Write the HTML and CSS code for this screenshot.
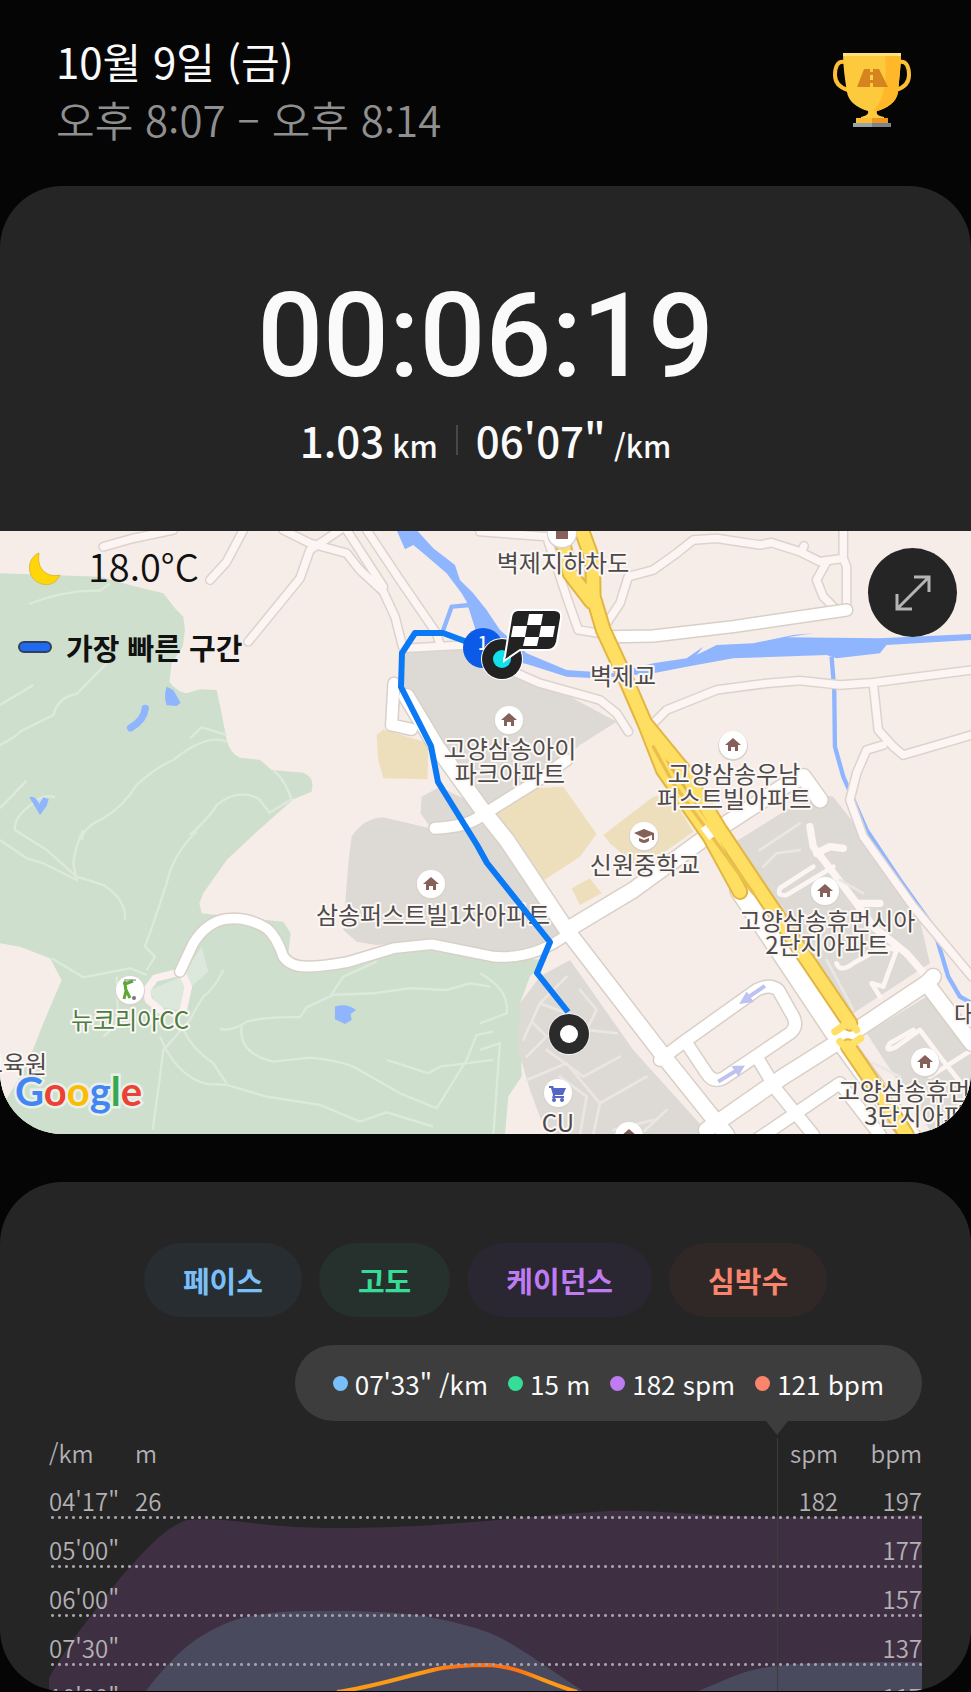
FILE: index.html
```html
<!DOCTYPE html>
<html lang="ko">
  <head>
    <meta charset="UTF-8" />
    <meta name="viewport" content="width=device-width, initial-scale=1" />
    <title>달리기 기록</title>
    <link rel="stylesheet" href="styles.css">
  </head>
  <body>
    <header class="top">
      <div>
        <h1 class="date">10월 9일 (금)</h1>
        <p class="period">오후 8:07 – 오후 8:14</p>
      </div>
      <svg class="trophy" viewBox="0 0 78 76" aria-hidden="true">
        <g fill="none" stroke="#fcbf35" stroke-width="4">
          <path d="M12 10C4 8 2 16 2 23c0 9 6 13 13 15" />
          <path d="M66 10c8-2 10 6 10 13 0 9-6 13-13 15" />
        </g>
        <path fill="#fdca3e" d="M10 2h58c0 12-2 26-3 38-1 10-12 17-21 19-1 3 1 5 7 6v3H28v-3c5-1 8-3 7-6-11-3-20-10-21-19C12 28 10 14 10 2z" />
        <path fill="#ffb82a" d="M52 2h16c0 12-2 26-3 38-1 10-12 17-21 19h-4c12-12 14-30 12-57z" />
        <rect x="10" y="1" width="58" height="3" fill="#ffe07a" />
        <path fill="#d5841f" d="M31 17h6v3h3v-3h6l9 18H40v-4h-3v4H24z" />
        <path fill="#ffce55" d="M37 23h3v5h-3z" />
        <rect x="23" y="66" width="16" height="6" fill="#fdbb36" />
        <rect x="39" y="66" width="16" height="6" fill="#f0961f" />
        <rect x="20" y="71" width="19" height="4" fill="#9aa5a8" />
        <rect x="39" y="71" width="19" height="4" fill="#79858b" />
      </svg>
    </header>

    <main>
      <section class="card summary">
        <div class="timer">00:06:19</div>
        <div class="stats">
          <span class="stat">1.03 <small>km</small></span>
          <i class="divider"></i>
          <span class="stat">06'07" <small>/km</small></span>
        </div>

        <div class="map">
          <svg class="map-canvas" viewBox="0 1 971 603">
            <defs>
              <g id="pin">
                <circle r="15" fill="#d9d3cd" cy="1" />
                <circle r="14" fill="#fff" />
              </g>
              <g id="home">
                <use href="#pin" />
                <path fill="#856159" d="M0-7l8 7H5v6H2V2h-4v4h-3V0h-3z" />
              </g>
            </defs>

            <!-- land, drawn at 3x -->
            <g transform="scale(0.3333)">
              <rect width="2916" height="1815" fill="#f6ede8" />
              <path fill="#cedfcd" d="M0 130L300 140 400 168 490 190 525 235 550 260 555 300 548 350 515 400 508 455Q530 485 560 490L600 478 650 480 665 550 680 630Q690 670 720 683L780 690 815 720 910 728Q940 740 937 770L935 785 880 808 760 915 680 990 610 1090 598 1120 605 1150 700 1160 850 1175 872 1210 865 1270 900 1300 1040 1300 1130 1260 1290 1240 1480 1280 1640 1290 1590 1340 1560 1420 1565 1640 1525 1700 1515 1815H0z" />
              <path fill="#f6ede8" d="M0 1240L60 1250 150 1285 185 1350 130 1480 95 1570 60 1640 0 1740z" />
              <path fill="#dce8dc" d="M605 1250L625 1325 575 1370 540 1440 470 1430 450 1380 545 1340z" />
              <g fill="#dddad5">
                <path d="M1215 365L1395 358 1580 430 1850 575 1740 645 1600 760 1470 850 1330 660 1210 500z" />
                <path d="M1265 800L1320 770 1440 830 1400 880 1290 890 1262 850z" />
                <path d="M1055 920Q1090 865 1150 862L1290 895 1490 880 1680 1160 1690 1210 1600 1260 1480 1275 1290 1230 1130 1245 1070 1235 1030 1200 1045 1000z" />
                <path d="M1620 1340L1710 1290 1900 1560 2130 1815H1640L1590 1680 1555 1560 1560 1420z" />
                <path d="M2200 940L2440 790 2500 800 2640 980 2760 1170 2790 1300 2560 1450 2500 1410z" />
                <path d="M2600 1510L2780 1400 2916 1540V1815H2800z" />
              </g>
              <g fill="#eedfbc">
                <path d="M1130 615L1150 598 1285 640 1283 748 1150 745 1135 690z" />
                <path d="M1490 850L1600 775 1690 770 1790 912 1740 980 1625 1055z" />
                <path d="M1810 915L1960 800 2010 790 2080 905 1960 990 1900 1000 1830 940z" />
                <path d="M1715 1075L1770 1045 1805 1090 1740 1125z" />
              </g>

              <!-- trails -->
              <g fill="none" stroke="#ddeadb" stroke-width="7">
                <path d="M88 222Q190 180 300 182L330 160" />
                <path d="M0 645Q50 620 60 605L160 555Q175 500 230 492L320 400" />
                <path d="M0 525L100 465M0 835L80 752" />
                <path d="M245 930Q250 890 310 865 370 830 410 765 470 710 520 690 620 610 680 635M570 625L605 592 680 615" />
                <path d="M165 802Q130 790 100 820 40 860 45 900L140 960 230 1040 310 1065Q380 1110 375 1170" />
                <path d="M570 915Q640 850 650 825 720 770 780 810L808 848 875 808Q850 740 820 722" />
                <path d="M250 900Q225 950 220 1000L230 1050 130 1000 80 985 0 930" />
                <path d="M590 905Q520 970 500 1060L460 1180 435 1250 465 1280 440 1320" />
                <path d="M155 1285L250 1342 390 1315 440 1335M350 1340L355 1480 310 1520" />
                <path d="M480 1520Q530 1640 620 1662L680 1665 800 1700 960 1725 1080 1775 1160 1747 1300 1790" />
                <path d="M550 1500Q580 1560 640 1600L680 1660M670 1320Q640 1380 610 1400 590 1430 570 1470L490 1560 480 1640 458 1800" />
                <path d="M660 1497Q700 1505 740 1475 800 1460 900 1462L920 1432 1000 1395 1120 1390 1230 1375 1340 1380 1410 1360 1470 1370" />
                <path d="M725 1490Q715 1570 820 1595L930 1583Q1010 1590 1060 1610L1200 1690 1310 1735 1400 1590 1430 1515 1480 1505" />
                <path d="M1160 1590L1285 1630 1320 1610 1480 1590M990 1400L1030 1340 1130 1295" />
                <path d="M1440 1330Q1530 1380 1520 1450L1440 1480M1440 1560L1500 1540 1480 1815" />
              </g>

              <!-- water -->
              <g fill="#8fb5ff">
                <path d="M1190 0L1250 0 1300 55 1365 105 1380 150 1420 190 1460 240 1500 300 1580 370 1700 420 1840 430 1960 400 2060 385 2110 350 2090 375 2150 345 2260 340 2380 315 2440 310 2360 322 2640 325 2916 312V330L2660 345 2640 370 2510 385 2480 375 2200 385 2060 410 1960 430 1790 445 1700 440 1590 405 1500 380 1430 310 1400 215 1385 190 1340 130 1270 70 1240 45 1215 58z" />
                <path d="M500 470L520 480 542 518 530 528 500 526Q490 500 500 470z" />
                <path d="M88 802Q105 795 118 822L130 802 146 808 140 828 120 855z" />
                <path d="M1005 1430Q1040 1418 1068 1440L1052 1452 1055 1470 1035 1482 1005 1468z" />
              </g>
              <g fill="none" stroke="#8fb5ff">
                <path stroke-width="22" stroke-linecap="round" d="M436 535Q432 570 392 594" />
                <path stroke-width="13" d="M1328 305L1355 230 1410 225M2495 380L2503 480 2505 650 2530 740 2600 900 2700 1050 2800 1190 2845 1340 2880 1400 2916 1420" />
              </g>

              <!-- side roads -->
              <g fill="none" stroke-linecap="round" stroke-linejoin="round">
                <g stroke="#dcd3cc" stroke-width="31">
                  <path d="M310 50L400 25 520 0M630 150L680 95 730 0M745 335L900 145 930 60 1020 0" />
                  <path d="M850 0L930 40 1040 70 1080 120 1150 185 1185 260 1208 350M1040 0L1150 170M1100 0L1200 150 1310 310 1320 345M1210 355L1400 345" />
                  <path d="M1440 5L1640 20 1700 200 1735 300 1800 310M1800 310L1860 220 1885 140 1960 120 2030 70 2080 30 2150 25 2280 45 2315 38 2400 65 2460 95 2530 85M2530 0V85L2540 110V240M2480 95L2450 150 2470 200 2510 240M2405 65L2412 48" />
                  <path d="M1540 425L1620 460 1800 510 1850 550 1885 605M1960 580L2000 540 2150 480 2300 460 2400 452 2520 465 2620 458 2916 420M2620 460L2635 600 2680 650 2710 675 2916 615M2650 645L2600 660 2570 730 2550 810 2590 920 2740 1130 2916 1340" />
                </g>
                <g stroke="#fcf5f3" stroke-width="22">
                  <path d="M310 50L400 25 520 0M630 150L680 95 730 0M745 335L900 145 930 60 1020 0" />
                  <path d="M850 0L930 40 1040 70 1080 120 1150 185 1185 260 1208 350M1040 0L1150 170M1100 0L1200 150 1310 310 1320 345M1210 355L1400 345" />
                  <path d="M1440 5L1640 20 1700 200 1735 300 1800 310M1800 310L1860 220 1885 140 1960 120 2030 70 2080 30 2150 25 2280 45 2315 38 2400 65 2460 95 2530 85M2530 0V85L2540 110V240M2480 95L2450 150 2470 200 2510 240M2405 65L2412 48" />
                  <path d="M1540 425L1620 460 1800 510 1850 550 1885 605M1960 580L2000 540 2150 480 2300 460 2400 452 2520 465 2620 458 2916 420M2620 460L2635 600 2680 650 2710 675 2916 615M2650 645L2600 660 2570 730 2550 810 2590 920 2740 1130 2916 1340" />
                  <path stroke="#fbf0ef" d="M545 1325L465 1345 440 1380 445 1410 480 1440M545 1325L565 1370 550 1440" />
                  <path d="M2430 890L2440 950 2570 1120 2620 1190 2720 1270 2780 1340M2450 970L2490 950 2530 955M2570 1120L2640 1120" />
                  <path stroke-width="14" d="M2440 1010L2340 1075Q2330 1100 2360 1095L2500 1010M2510 1300Q2520 1330 2560 1300L2650 1250 2690 1260 2650 1370M2650 1370L2615 1360 2640 1400M2740 1500L2670 1540Q2650 1570 2690 1550L2760 1500 2820 1580 2900 1680M2790 1640L2916 1560" />
                </g>
                <g stroke="#ebe6e3" stroke-width="8">
                  <path d="M1570 1530L1620 1420 1700 1340M1620 1420L1700 1450M1580 1580L1640 1520 1600 1480M1640 1560L1750 1640 1860 1580M1760 1500L1850 1510M1680 1640L1760 1700 1740 1815M1580 1650L1700 1600 1800 1720 1940 1640M1800 1720L1780 1815M1920 1815L2000 1740M1840 1800L1960 1770M1740 1380L1790 1440 1760 1500" />
                  <path d="M2280 960L2400 880M2290 1010L2330 970 2400 960M2520 1050L2590 1090M2480 1290L2560 1440M2620 1600L2700 1640" />
                </g>
              </g>

              <!-- main roads -->
              <g fill="none" stroke-linecap="round" stroke-linejoin="round">
                <g stroke="#d8d0c7">
                  <path stroke-width="38" d="M540 1325L580 1240 Q620 1175 680 1167 T800 1195 Q830 1220 850 1280 Q870 1310 920 1310 T1040 1297 L1180 1255 1295 1243 1480 1280 Q1600 1290 1700 1215" />
                  <path stroke-width="42" d="M1182 460L1175 585 1235 598M1830 320L1960 318 2200 290 2540 240M1305 895Q1400 890 1440 860L1600 760 1700 690" />
                  <path stroke-width="54" d="M1220 500L1310 650 1440 830 1520 930 1700 1200 2000 1590 2180 1815M1700 1200L1900 1080 2120 920 2350 770 2410 740 2460 810M2120 1800L2350 1640 2540 1520 2780 1360 2800 1340M2780 1360L2916 1540" />
                  <path stroke-width="66" d="M2220 1080L2500 1500 2740 1830" />
                  <path stroke-width="44" d="M1980 1590L2060 1530 2270 1380Q2310 1360 2335 1380L2380 1460Q2395 1490 2370 1510L2170 1645Q2140 1660 2120 1630L2060 1540M2270 1580L2330 1680 2440 1815M2270 1830L2520 1660 2640 1815" />
                </g>
                <g stroke="#fff">
                  <path stroke-width="29" d="M540 1325L580 1240 Q620 1175 680 1167 T800 1195 Q830 1220 850 1280 Q870 1310 920 1310 T1040 1297 L1180 1255 1295 1243 1480 1280 Q1600 1290 1700 1215" />
                  <path stroke-width="33" d="M1182 460L1175 585 1235 598M1830 320L1960 318 2200 290 2540 240M1305 895Q1400 890 1440 860L1600 760 1700 690" />
                  <path stroke-width="45" d="M1220 500L1310 650 1440 830 1520 930 1700 1200 2000 1590 2180 1815M1700 1200L1900 1080 2120 920 2350 770 2410 740 2460 810M2120 1800L2350 1640 2540 1520 2780 1360 2800 1340M2780 1360L2916 1540" />
                  <path stroke-width="57" d="M2220 1080L2500 1500 2740 1830" />
                  <path stroke-width="35" d="M1980 1590L2060 1530 2270 1380Q2310 1360 2335 1380L2380 1460Q2395 1490 2370 1510L2170 1645Q2140 1660 2120 1630L2060 1540M2270 1580L2330 1680 2440 1815M2270 1830L2520 1660 2640 1815" />
                </g>
              </g>

              <!-- highway -->
              <g fill="none" stroke-linecap="round" stroke-linejoin="round">
                <path stroke="#e2b544" stroke-width="50" d="M1680 0L1710 130 1775 215M1745 0L1778 90 1780 200 1810 300 1870 430 1935 580 1990 720 2130 920 2220 1085M1935 580L2050 720 2160 900 2300 1110 2550 1480M2545 1550L2640 1690 2720 1815" />
                <path stroke="#ffdf62" stroke-width="38" d="M1680 0L1710 130 1775 215M1745 0L1778 90 1780 200 1810 300 1870 430 1935 580 1990 720 2130 920 2220 1085M1935 580L2050 720 2160 900 2300 1110 2550 1480M2545 1550L2640 1690 2720 1815" />
                <path stroke="#e9c04e" stroke-width="10" d="M1960 650L2020 760 2100 870 2260 1090" />
                <path stroke="#ffe066" stroke-width="22" d="M2505 1505L2550 1475 2570 1500M2520 1535L2540 1555 2582 1525" />
                <path stroke="#fff" stroke-width="18" stroke-linecap="butt" d="M2110 890L2135 925" />
              </g>
              <g fill="none" stroke="#bdc2f2" stroke-width="12">
                <path d="M2295 1368L2230 1412M2155 1655L2222 1614" />
                <path fill="#bdc2f2" stroke="none" d="M2218 1422L2240 1385 2262 1416zM2235 1607L2195 1608 2215 1640z" />
              </g>
            </g>

            <g class="map-pins">
              <g transform="translate(562 3)"><use href="#pin" /><path fill="#856159" d="M-6-6H6V6H-6z" /></g>
              <use href="#home" x="509" y="190" />
              <use href="#home" x="733" y="215" />
              <use href="#home" x="431" y="354" />
              <use href="#home" x="825" y="361" />
              <use href="#home" x="925" y="532" />
              <use href="#home" x="629" y="606" />
              <g transform="translate(644 306)">
                <use href="#pin" />
                <path fill="#856159" d="M-10-3L0-7 10-3V4H8V-1L0 2zM-5 2L0 4 5 2V5Q0 9-5 5z" />
              </g>
              <g transform="translate(130 460)">
                <use href="#pin" />
                <path fill="none" stroke="#5fa834" stroke-width="3" d="M3-9L-5-6-4 1-6 9M-4 0L0 8" />
                <path fill="none" stroke="#777" d="M-6-10H6" />
                <circle cx="-5" cy="-7" r="2" fill="#5fa834" />
                <circle cx="4" cy="8" r="2" fill="#777" />
              </g>
              <g transform="translate(558 563)">
                <use href="#pin" />
                <path fill="#5566c4" d="M-9-7H-5L-4-5H8L5 2H-3L-3 3H6V5H-6L-5 2-7-5H-9z" />
                <circle cx="-4" cy="7" r="2" fill="#5566c4" />
                <circle cx="4" cy="7" r="2" fill="#5566c4" />
              </g>
            </g>

            <g class="map-labels">
              <text x="563" y="42">벽제지하차도</text>
              <text x="623" y="155">벽제교</text>
              <text x="510" y="228">고양삼송아이</text>
              <text x="510" y="253">파크아파트</text>
              <text x="734" y="253">고양삼송우남</text>
              <text x="734" y="278">퍼스트빌아파트</text>
              <text x="645" y="344">신원중학교</text>
              <text x="433" y="394">삼송퍼스트빌1차아파트</text>
              <text x="827" y="400">고양삼송휴먼시아</text>
              <text x="827" y="424">2단지아파트</text>
              <text x="130" y="499" class="green">뉴코리아CC</text>
              <text x="14" y="543">교육원</text>
              <text x="965" y="493">대</text>
              <text x="558" y="602">CU</text>
              <text x="926" y="570">고양삼송휴먼시아</text>
              <text x="926" y="595">3단지아파트</text>
            </g>
            <text x="15" y="576" class="google"><tspan fill="#4285f4">G</tspan><tspan fill="#ea4335">o</tspan><tspan fill="#fbbc05">o</tspan><tspan fill="#4285f4">g</tspan><tspan fill="#34a853">l</tspan><tspan fill="#ea4335">e</tspan></text>

            <!-- running route -->
            <path fill="none" stroke="#0b78f4" stroke-width="6" stroke-linejoin="round" d="M470 113L443 103H415L402 123 401 157 431 216 438 252 477 315 487 333 550 412 537 443 568 482" />
            <circle cx="569" cy="504" r="21" fill="#fff" opacity="0.6" />
            <circle cx="569" cy="504" r="20" fill="#2b2b2b" />
            <circle cx="569" cy="504" r="9" fill="#fff" />
            <circle cx="483" cy="118" r="20" fill="#0b5be8" />
            <text x="483" y="120" class="km-mark">1</text>
            <circle cx="502" cy="129" r="21" fill="#fff" />
            <circle cx="502" cy="129" r="20" fill="#222" />
            <circle cx="502" cy="129" r="9" fill="#12e0ea" />
            <path fill="#222" stroke="#fff" stroke-width="2" d="M518 80h36q8 0 7 8l-4 24q-2 8-9 8h-28l-16 11q0-3 1-5l6-38q1-8 7-8z" />
            <g fill="#fff">
              <path d="M529 84h14l-2 11h-14zM513 96h14l-2 11h-14zM541 96h14l-2 11h-14zM525 107h14l-2 9h-14z" />
            </g>
          </svg>

          <div class="map-info">
            <div class="weather">
              <svg viewBox="0 0 34 34" aria-hidden="true"><path fill="#ffd60a" stroke="#e0b93a" d="M11 1C3 4-1 14 3 23s17 13 25 6l4-6C20 26 8 18 11 1z" /></svg>
              <span>18.0°C</span>
            </div>
            <div class="legend"><i></i><span>가장 빠른 구간</span></div>
          </div>
          <button class="expand" type="button" aria-label="지도 확대">
            <svg viewBox="0 0 36 36" aria-hidden="true"><path d="M2 34L34 2M19 2h15v15M2 19v15h15" /></svg>
          </button>
        </div>
      </section>

      <section class="card graph">
        <div class="chips">
          <button class="chip pace" type="button">페이스</button>
          <button class="chip altitude" type="button">고도</button>
          <button class="chip cadence" type="button">케이던스</button>
          <button class="chip heart" type="button">심박수</button>
        </div>

        <div class="bubble">
          <span class="pace">07'33" /km</span>
          <span class="altitude">15 m</span>
          <span class="cadence">182 spm</span>
          <span class="heart">121 bpm</span>
        </div>

        <div class="chart">
          <svg class="plot" viewBox="0 0 873 253" preserveAspectRatio="none" aria-hidden="true">
            <defs>
              <linearGradient id="pulse" gradientUnits="userSpaceOnUse" x1="288" y1="0" x2="528" y2="0">
                <stop offset="0.35" stop-color="#fb9a16" />
                <stop offset="0.5" stop-color="#fb6f10" />
                <stop offset="0.74" stop-color="#fb6f10" />
                <stop offset="0.86" stop-color="#fb9a16" />
              </linearGradient>
            </defs>
            <path fill="#3e3042" d="M0 240C10 222 28 195 44 175C58 157 68 143 81 129C98 110 118 88 138 82C170 79 210 87 234 88C280 92 340 89 368 88C430 85 500 76 560 73C610 72 640 77 690 78C760 81 820 78 873 77V253H0z" />
            <path fill="#4a4a5f" d="M97 253C108 238 130 212 151 199C172 186 188 180 204 178C230 172 260 173 288 173C320 173 350 175 368 177C400 182 425 189 441 195C465 205 490 224 534 253zM649 253C670 245 685 237 700 233C730 225 770 224 873 224V253z" />
            <path fill="none" stroke="url(#pulse)" stroke-width="4" d="M288 254C320 250 350 240 384 232C400 228 420 227 441 227C470 229 490 242 528 254" />
          </svg>
          <i class="cursor"></i>
          <div class="row head"><span>/km</span><span>m</span><span>spm</span><span>bpm</span></div>
          <div class="row"><span>04'17"</span><span>26</span><span>182</span><span>197</span></div>
          <div class="row"><span>05'00"</span><span></span><span></span><span>177</span></div>
          <div class="row"><span>06'00"</span><span></span><span></span><span>157</span></div>
          <div class="row"><span>07'30"</span><span></span><span></span><span>137</span></div>
          <div class="row"><span>10'00"</span><span></span><span></span><span>117</span></div>
        </div>
      </section>
    </main>
  </body>
</html>
```

FILE: styles.css
```css
* {
  box-sizing: border-box;
}

body {
  margin: 0;
  padding-bottom: 1px;
  background-color: #050505;
  color: #fafafa;
  font-family: "Noto Sans CJK KR", "Noto Sans", sans-serif;
}

button {
  border: none;
  font-family: inherit;
  cursor: pointer;
}

.top {
  display: flex;
  justify-content: space-between;
  align-items: center;
  height: 186px;
  padding: 0 60px 6px 56px;
}

.date,
.period {
  margin: 0;
  font-size: 42px;
  font-weight: 400;
  line-height: 58px;
}

.period {
  color: #8f8f8f;
  font-weight: 350;
}

.trophy {
  width: 78px;
  height: 76px;
}

.card {
  background-color: #252525;
  border-radius: 62px;
  overflow: hidden;
}

/* time and distance */
.summary {
  margin-bottom: 48px;
  padding-top: 92px;
  text-align: center;
}

.timer {
  font-family: Roboto, sans-serif;
  font-size: 116px;
  font-weight: 500;
  line-height: 116px;
}

.stats {
  display: flex;
  justify-content: center;
  align-items: center;
  gap: 18px;
  margin: 16px 0 61px;
  font-size: 42px;
  font-weight: 500;
  line-height: 60px;
}

.stat {
  display: flex;
  align-items: baseline;
  gap: 8px;
  height: 60px;
}

.stats small {
  font-size: 30px;
}

.divider {
  width: 2px;
  height: 30px;
  background-color: #484848;
}

/* map */
.map {
  position: relative;
  text-align: left;
}

.map-canvas {
  display: block;
  width: 100%;
}

.map-labels {
  fill: #4f4a4a;
  stroke: #fbf7f4;
  stroke-width: 4px;
  stroke-linejoin: round;
  paint-order: stroke;
  font-size: 24px;
  text-anchor: middle;
}

.map-labels .green {
  fill: #4c7d43;
}

.google {
  font-family: Lato, sans-serif;
  font-size: 40px;
  font-weight: 700;
  stroke: #e9f0e8;
  stroke-width: 5px;
  paint-order: stroke;
}

.km-mark {
  fill: #fff;
  font-size: 18px;
  font-weight: 500;
  text-anchor: middle;
}

.map-info {
  position: absolute;
  top: 12px;
  left: 18px;
  color: #111;
}

.weather {
  display: flex;
  align-items: center;
  gap: 26px;
  padding-left: 10px;
  font-size: 38px;
  font-weight: 350;
  line-height: 46px;
}

.weather svg {
  width: 34px;
  height: 34px;
  margin-top: 6px;
}

.legend {
  display: flex;
  align-items: center;
  gap: 14px;
  margin-top: 38px;
  font-size: 29px;
  font-weight: 700;
  line-height: 40px;
}

.legend i {
  width: 34px;
  height: 12px;
  border: 2px solid #33405c;
  border-radius: 6px;
  background-color: #1f6bf0;
}

.expand {
  position: absolute;
  top: 17px;
  right: 14px;
  width: 89px;
  height: 89px;
  padding: 0;
  border-radius: 50%;
  background-color: #252525;
}

.expand svg {
  display: block;
  width: 36px;
  height: 36px;
  margin: auto;
  fill: none;
  stroke: #b5b5b5;
  stroke-width: 3px;
}

/* graph */
.graph {
  padding: 61px 49px 0;
}

.chips {
  display: flex;
  justify-content: center;
  gap: 17px;
}

.chip {
  height: 74px;
  padding: 0 39px;
  border-radius: 37px;
  font-size: 29px;
  font-weight: 700;
}

.chip.pace {
  background-color: #282d31;
  color: #79c0fa;
}

.chip.altitude {
  background-color: #26302c;
  color: #35dd98;
}

.chip.cadence {
  background-color: #2a2632;
  color: #bf7bf2;
}

.chip.heart {
  background-color: #302827;
  color: #fb846c;
}

.bubble {
  position: relative;
  display: flex;
  align-items: center;
  gap: 20px;
  width: fit-content;
  height: 76px;
  margin: 28px 0 0 auto;
  padding: 0 38px;
  border-radius: 38px;
  background-color: #3d3d3d;
  font-size: 26px;
}

.bubble::after {
  content: "";
  position: absolute;
  top: 100%;
  right: 134px;
  border: 11px solid transparent;
  border-top: 14px solid #3d3d3d;
  border-bottom: none;
}

.bubble span {
  display: flex;
  align-items: center;
  gap: 7px;
}

.bubble span::before {
  content: "";
  width: 15px;
  height: 15px;
  border-radius: 50%;
}

.bubble .pace::before {
  background-color: #79c0fa;
}

.bubble .altitude::before {
  background-color: #35dd98;
}

.bubble .cadence::before {
  background-color: #bf7bf2;
}

.bubble .heart::before {
  background-color: #fb846c;
}

.chart {
  position: relative;
  height: 253px;
  margin-top: 17px;
  overflow: hidden;
}

.plot {
  position: absolute;
  inset: 0;
  width: 100%;
  height: 100%;
}

.cursor {
  position: absolute;
  top: 0;
  right: 144px;
  bottom: 0;
  width: 1px;
  background-color: #3d3d3d;
}

.row {
  position: relative;
  display: grid;
  grid-template-columns: 86px 1fr 1fr 84px;
  height: 49px;
  padding-top: 16px;
  background: radial-gradient(circle, #a8a0aa 1px, transparent 2px) left bottom / 7px 3px repeat-x;
  color: #b4b0b5;
  font-size: 24px;
  font-weight: 350;
  line-height: 30px;
}

.row.head {
  height: 32px;
  padding-top: 0;
  background: none;
}

.row span:nth-child(n + 3) {
  text-align: right;
}
```
